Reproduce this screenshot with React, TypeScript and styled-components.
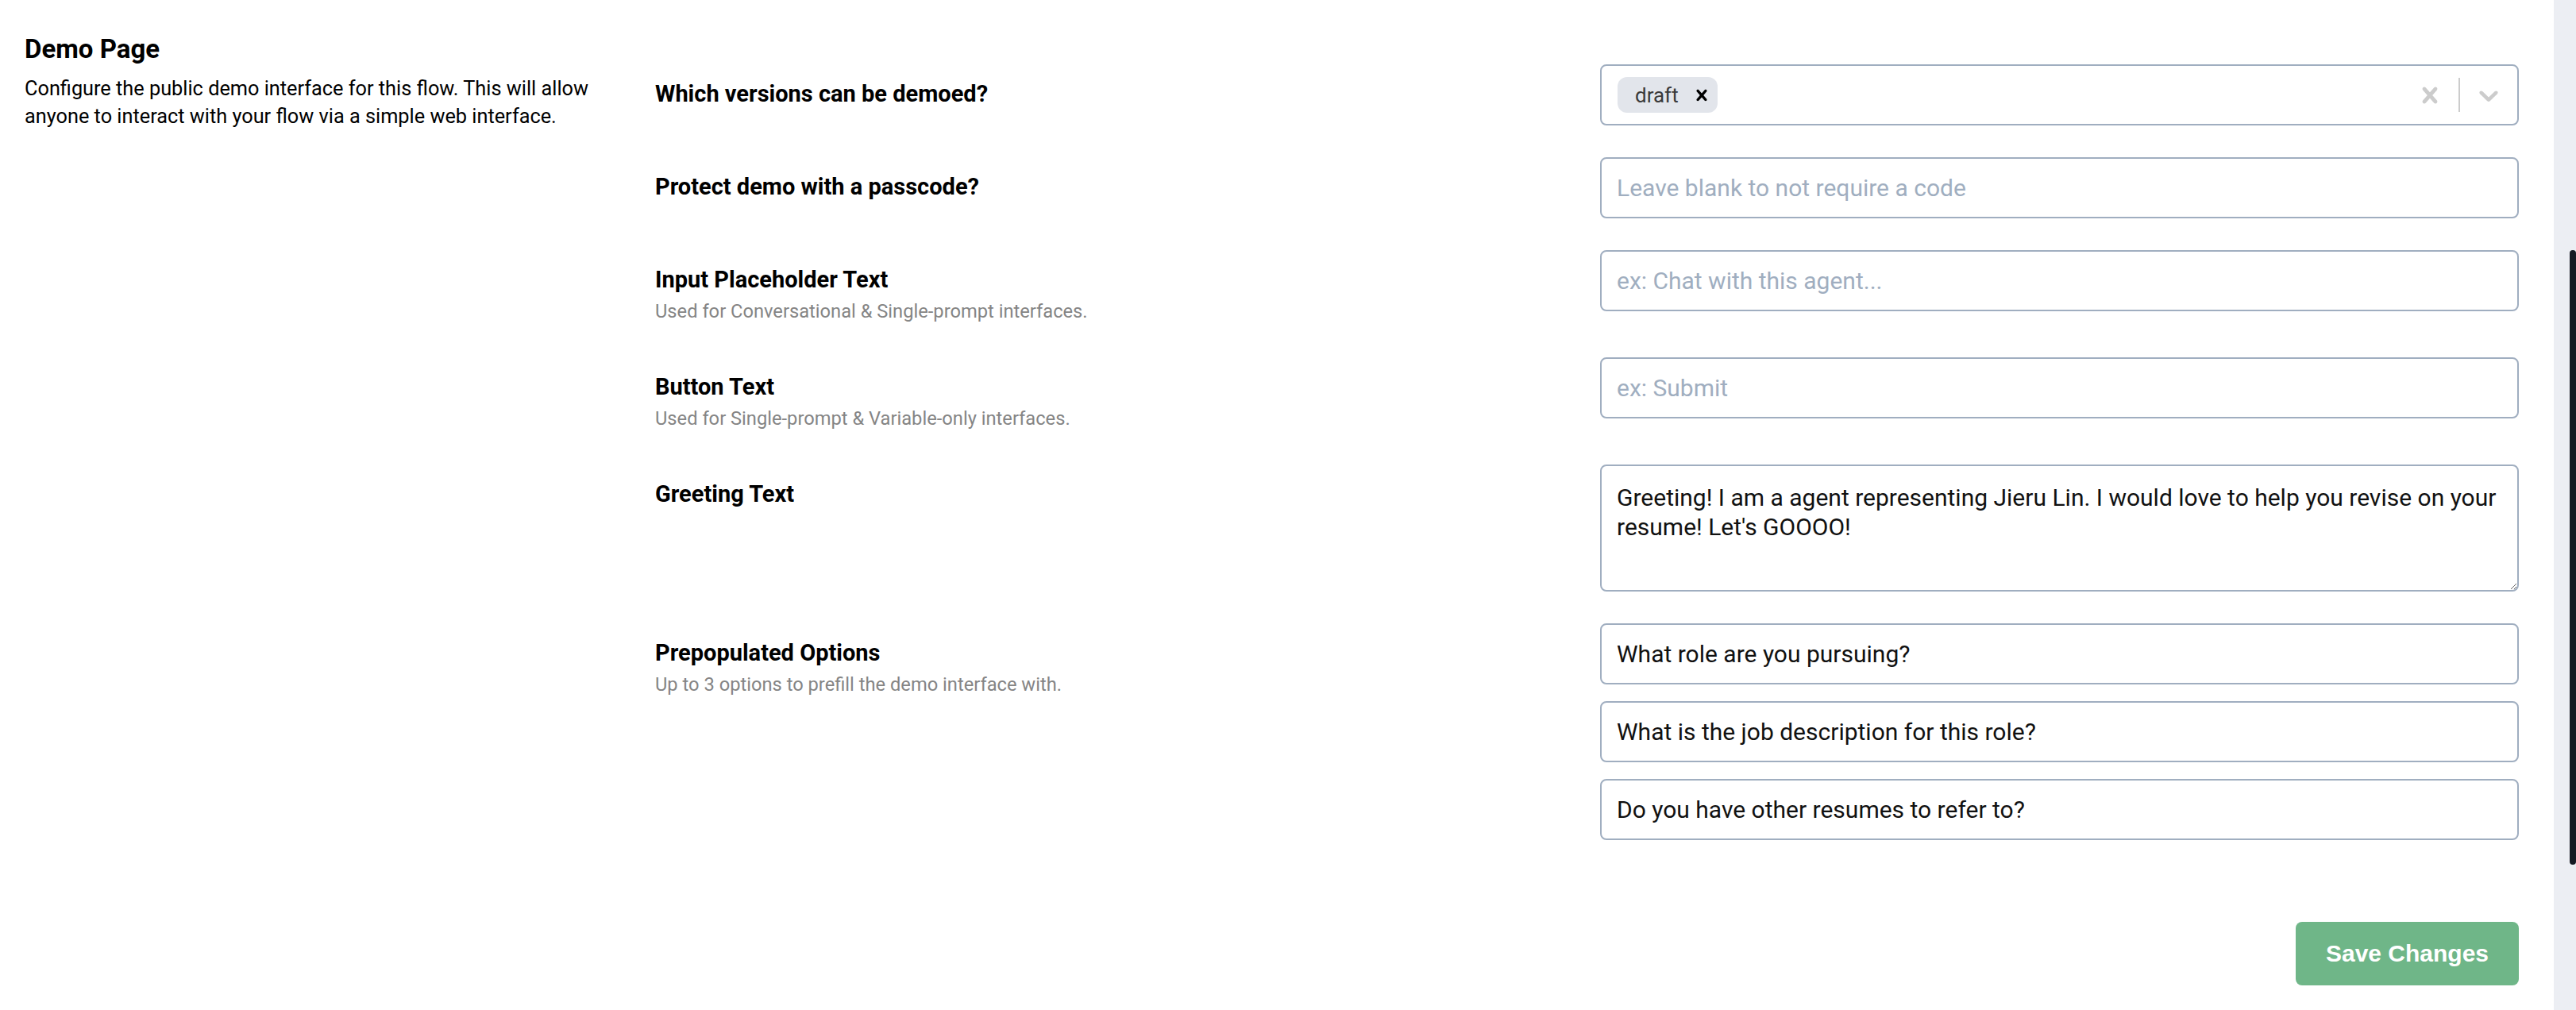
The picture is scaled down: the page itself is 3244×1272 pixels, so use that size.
import React from "react";
import styled, { createGlobalStyle } from "styled-components";

const GlobalStyle = createGlobalStyle`
  html, body {
    margin: 0;
    padding: 0;
    background: #ffffff;
  }
  body {
    font-family: Roboto, "Liberation Sans", sans-serif;
    color: #000000;
    overflow: hidden;
  }
  * {
    box-sizing: border-box;
  }
`;

const Shell = styled.div`
  display: flex;
  width: 3244px;
  height: 1272px;
  overflow: hidden;
`;

const Main = styled.main`
  flex: 1;
  display: grid;
  grid-template-columns: 760px 1fr;
  column-gap: 34px;
  align-items: start;
  padding: 42px 44px 0 31px;
`;

const Intro = styled.section``;

const Title = styled.h2`
  margin: 0;
  font-size: 33px;
  font-weight: 700;
  line-height: 40px;
`;

const Blurb = styled.p`
  margin: 12px 0 0;
  font-size: 25.3px;
  line-height: 35px;
`;

const Form = styled.form`
  display: flex;
  flex-direction: column;
  gap: 40px;
  padding-top: 39px;
`;

const Row = styled.div`
  display: grid;
  grid-template-columns: 1fr 1fr;
  column-gap: 33px;
  align-items: start;
`;

const LabelCol = styled.div`
  padding-top: 19px;
`;

const Label = styled.label`
  display: block;
  font-size: 29px;
  font-weight: 700;
  line-height: 36px;
`;

const Hint = styled.div`
  margin-top: 4px;
  font-size: 23.7px;
  line-height: 36px;
  color: #858585;
`;

const TextInput = styled.input`
  display: block;
  width: 100%;
  height: 77px;
  border: 2px solid #a0aec0;
  border-radius: 8px;
  padding: 0 20px 0 19px;
  font-family: Roboto, "Liberation Sans", sans-serif;
  font-size: 30px;
  color: #111111;
  background: #ffffff;
  outline: none;

  &::placeholder {
    color: #a0aec0;
  }
`;

const TextArea = styled.textarea`
  display: block;
  width: 100%;
  height: 160px;
  border: 2px solid #a0aec0;
  border-radius: 8px;
  padding: 21px 8px 0 19px;
  font-family: Roboto, "Liberation Sans", sans-serif;
  font-size: 30px;
  line-height: 37px;
  color: #111111;
  background: #ffffff;
  outline: none;
  resize: vertical;
`;

const OptionStack = styled.div`
  display: flex;
  flex-direction: column;
  gap: 21px;
`;

const SelectBox = styled.div`
  display: flex;
  align-items: center;
  height: 77px;
  border: 2px solid #a0aec0;
  border-radius: 8px;
  padding-left: 20px;
  background: #ffffff;
`;

const ValueArea = styled.div`
  flex: 1;
  display: flex;
  align-items: center;
`;

const Chip = styled.span`
  display: inline-flex;
  align-items: center;
  gap: 15px;
  height: 45px;
  padding: 0 6px 0 22px;
  border-radius: 12px;
  background: #e2e5eb;
  font-size: 26px;
  color: #3a3a3a;
`;

const ChipRemove = styled.span`
  display: flex;
  align-items: center;
  color: #000000;
`;

const Indicator = styled.div`
  display: flex;
  align-items: center;
  padding: 16px;
  color: #cccccc;
`;

const Separator = styled.span`
  align-self: stretch;
  width: 2px;
  margin: 15px 0;
  background: #cccccc;
`;

const Footer = styled.div`
  display: flex;
  justify-content: flex-end;
  margin-top: 63px;
`;

const SaveButton = styled.button`
  width: 281px;
  height: 80px;
  border: none;
  border-radius: 8px;
  background: #6fb688;
  color: #ffffff;
  font-family: "Liberation Sans", Arial, sans-serif;
  font-size: 30px;
  font-weight: 700;
  cursor: pointer;
`;

const ScrollTrack = styled.div`
  flex-shrink: 0;
  width: 28px;
  display: flex;
  justify-content: flex-end;
  background: #eceef3;
`;

const ScrollThumb = styled.div<{ top: number; size: number }>`
  width: 8px;
  margin-top: ${(p) => p.top}px;
  height: ${(p) => p.size}px;
  border-radius: 4px;
  background: #161a23;
`;

const CROSS =
  "M14.348 14.849c-0.469 0.469-1.229 0.469-1.697 0l-2.651-3.030-2.651 3.029c-0.469 0.469-1.229 0.469-1.697 0-0.469-0.469-0.469-1.229 0-1.697l2.758-3.15-2.759-3.152c-0.469-0.469-0.469-1.228 0-1.697s1.228-0.469 1.697 0l2.652 3.031 2.651-3.031c0.469-0.469 1.228-0.469 1.697 0s0.469 1.229 0 1.697l-2.758 3.152 2.758 3.15c0.469 0.469 0.469 1.229 0 1.698z";
const CHEVRON =
  "M4.516 7.548c0.436-0.446 1.043-0.481 1.576 0l3.908 3.747 3.908-3.747c0.533-0.481 1.141-0.446 1.574 0 0.436 0.445 0.408 1.197 0 1.615-0.406 0.418-4.695 4.502-4.695 4.502-0.217 0.223-0.502 0.335-0.787 0.335s-0.57-0.112-0.789-0.335c0 0-4.287-4.084-4.695-4.502s-0.436-1.17 0-1.615z";

const Glyph = ({ d, size }: { d: string; size: number }) => (
  <svg width={size} height={size} viewBox="0 0 20 20" fill="currentColor" aria-hidden="true">
    <path d={d} />
  </svg>
);

const options = [
  "What role are you pursuing?",
  "What is the job description for this role?",
  "Do you have other resumes to refer to?",
];

const greeting =
  "Greeting! I am a agent representing Jieru Lin. I would love to help you revise on your resume! Let's GOOOO!";

const App = () => {
  return (
    <Shell>
      <GlobalStyle />
      <Main>
        <Intro>
          <Title>Demo Page</Title>
          <Blurb>
            Configure the public demo interface for this flow. This will allow anyone to interact
            with your flow via a simple web interface.
          </Blurb>
        </Intro>

        <Form onSubmit={(e) => e.preventDefault()}>
          <Row>
            <LabelCol>
              <Label>Which versions can be demoed?</Label>
            </LabelCol>
            <SelectBox>
              <ValueArea>
                <Chip>
                  draft
                  <ChipRemove>
                    <Glyph d={CROSS} size={28} />
                  </ChipRemove>
                </Chip>
              </ValueArea>
              <Indicator>
                <Glyph d={CROSS} size={40} />
              </Indicator>
              <Separator />
              <Indicator>
                <Glyph d={CHEVRON} size={40} />
              </Indicator>
            </SelectBox>
          </Row>

          <Row>
            <LabelCol>
              <Label>Protect demo with a passcode?</Label>
            </LabelCol>
            <TextInput placeholder="Leave blank to not require a code" />
          </Row>

          <Row>
            <LabelCol>
              <Label>Input Placeholder Text</Label>
              <Hint>Used for Conversational &amp; Single-prompt interfaces.</Hint>
            </LabelCol>
            <TextInput placeholder="ex: Chat with this agent..." />
          </Row>

          <Row>
            <LabelCol>
              <Label>Button Text</Label>
              <Hint>Used for Single-prompt &amp; Variable-only interfaces.</Hint>
            </LabelCol>
            <TextInput placeholder="ex: Submit" />
          </Row>

          <Row>
            <LabelCol>
              <Label>Greeting Text</Label>
            </LabelCol>
            <TextArea defaultValue={greeting} />
          </Row>

          <Row>
            <LabelCol>
              <Label>Prepopulated Options</Label>
              <Hint>Up to 3 options to prefill the demo interface with.</Hint>
            </LabelCol>
            <OptionStack>
              {options.map((opt) => (
                <TextInput key={opt} defaultValue={opt} />
              ))}
            </OptionStack>
          </Row>

          <Footer>
            <SaveButton type="submit">Save Changes</SaveButton>
          </Footer>
        </Form>
      </Main>
      <ScrollTrack>
        <ScrollThumb top={315} size={774} />
      </ScrollTrack>
    </Shell>
  );
};

export default App;
